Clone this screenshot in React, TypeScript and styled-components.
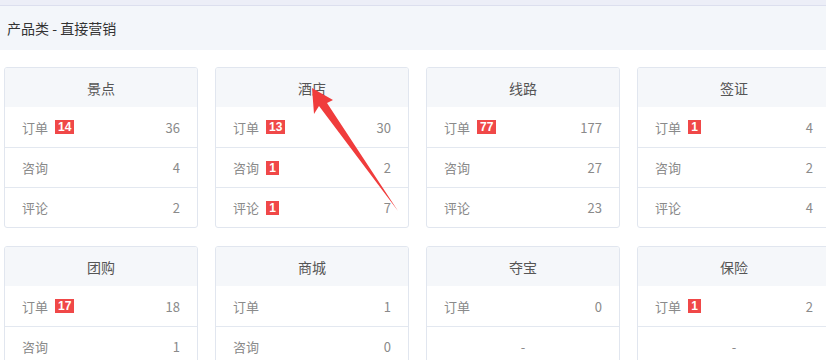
import styled, { createGlobalStyle } from 'styled-components';

interface Row {
  label?: string;
  badge?: number;
  value: string;
}

interface Category {
  title: string;
  rows: Row[];
}

const categories: Category[] = [
  {
    title: '景点',
    rows: [
      { label: '订单', badge: 14, value: '36' },
      { label: '咨询', value: '4' },
      { label: '评论', value: '2' },
    ],
  },
  {
    title: '酒店',
    rows: [
      { label: '订单', badge: 13, value: '30' },
      { label: '咨询', badge: 1, value: '2' },
      { label: '评论', badge: 1, value: '7' },
    ],
  },
  {
    title: '线路',
    rows: [
      { label: '订单', badge: 77, value: '177' },
      { label: '咨询', value: '27' },
      { label: '评论', value: '23' },
    ],
  },
  {
    title: '签证',
    rows: [
      { label: '订单', badge: 1, value: '4' },
      { label: '咨询', value: '2' },
      { label: '评论', value: '4' },
    ],
  },
  {
    title: '团购',
    rows: [
      { label: '订单', badge: 17, value: '18' },
      { label: '咨询', value: '1' },
    ],
  },
  {
    title: '商城',
    rows: [
      { label: '订单', value: '1' },
      { label: '咨询', value: '0' },
    ],
  },
  {
    title: '夺宝',
    rows: [{ label: '订单', value: '0' }, { value: '-' }],
  },
  {
    title: '保险',
    rows: [{ label: '订单', badge: 1, value: '2' }, { value: '-' }],
  },
];

const App = () => {
  return (
    <Page>
      <GlobalStyle />
      <TopStrip />
      <SectionHeader>产品类 - 直接营销</SectionHeader>
      <Grid>
        {categories.map((cat) => (
          <Card key={cat.title}>
            <CardTitle>{cat.title}</CardTitle>
            {cat.rows.map((row, i) =>
              row.label ? (
                <StatRow key={i}>
                  <Label>
                    {row.label}
                    {row.badge !== undefined && <Badge>{row.badge}</Badge>}
                  </Label>
                  <Value>{row.value}</Value>
                </StatRow>
              ) : (
                <EmptyRow key={i}>{row.value}</EmptyRow>
              )
            )}
          </Card>
        ))}
      </Grid>
      <Annotation width="826" height="360" viewBox="0 0 826 360">
        <polygon
          points="312,88 333,100 327,103 398,211 319,106 314,114"
          fill="#f03c3c"
        />
      </Annotation>
    </Page>
  );
};

export default App;

const GlobalStyle = createGlobalStyle`
  html, body {
    margin: 0;
    padding: 0;
    background: #fff;
    overflow: hidden;
    font-family: "Noto Sans CJK SC", "Noto Sans", sans-serif;
  }
`;

const Page = styled.div`
  position: relative;
  width: 826px;
  height: 360px;
  overflow: hidden;
`;

const TopStrip = styled.div`
  height: 5px;
  background: #eceef7;
  border-bottom: 1px solid #dcdfee;
`;

const SectionHeader = styled.div`
  height: 44px;
  display: flex;
  align-items: center;
  padding-left: 7px;
  background: #f3f6fa;
  font-size: 14px;
  color: #333;
`;

const Grid = styled.div`
  display: grid;
  grid-template-columns: repeat(4, 194px);
  column-gap: 17px;
  row-gap: 18px;
  padding: 17px 0 0 4px;
`;

const Card = styled.div`
  border: 1px solid #e1e6ef;
  border-radius: 3px;
  overflow: hidden;
  background: #fff;
`;

const CardTitle = styled.div`
  height: 39px;
  display: flex;
  align-items: center;
  justify-content: center;
  background: #f5f7fa;
  font-size: 14px;
  color: #555;
`;

const StatRow = styled.div`
  height: 39px;
  border-top: 1px solid #e3e8f0;
  display: flex;
  align-items: center;
  justify-content: space-between;
  padding: 0 17px;
  font-size: 13px;
  color: #8a8a8a;

  &:nth-of-type(2) {
    border-top: none;
    height: 40px;
  }
`;

const EmptyRow = styled(StatRow)`
  justify-content: center;
`;

const Label = styled.span`
  display: flex;
  align-items: center;
`;

const Badge = styled.span`
  margin-left: 7px;
  height: 14px;
  line-height: 14px;
  padding: 0 3px;
  min-width: 7px;
  text-align: center;
  background: #f04848;
  color: #fff;
  font-family: "Liberation Sans", Arial, sans-serif;
  font-weight: bold;
  font-size: 12px;
`;

const Value = styled.span`
  color: #8a8a8a;
`;

const Annotation = styled.svg`
  position: absolute;
  left: 0;
  top: 0;
  pointer-events: none;
`;
